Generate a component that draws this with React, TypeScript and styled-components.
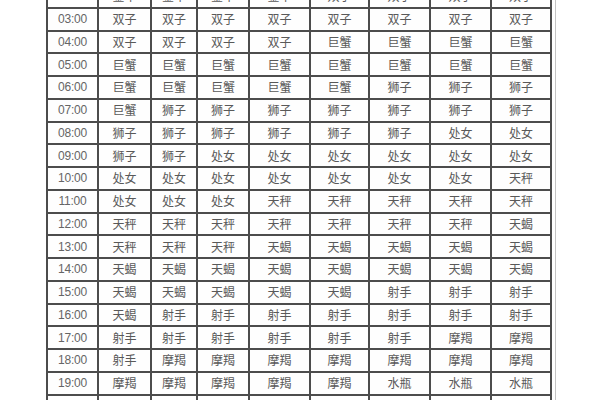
import React from 'react';
import styled, { createGlobalStyle } from 'styled-components';

const GlobalStyle = createGlobalStyle`
	html, body {
		margin: 0;
		padding: 0;
		background: #ffffff;
		overflow: hidden;
	}
`;

const COLUMN_WIDTHS = [51, 53, 46, 52, 61, 59, 61, 61, 60];

const ROWS: [string, string[]][] = [
	['02:00', ['金牛', '金牛', '金牛', '金牛', '双子', '双子', '双子', '双子']],
	['03:00', ['双子', '双子', '双子', '双子', '双子', '双子', '双子', '双子']],
	['04:00', ['双子', '双子', '双子', '双子', '巨蟹', '巨蟹', '巨蟹', '巨蟹']],
	['05:00', ['巨蟹', '巨蟹', '巨蟹', '巨蟹', '巨蟹', '巨蟹', '巨蟹', '巨蟹']],
	['06:00', ['巨蟹', '巨蟹', '巨蟹', '巨蟹', '巨蟹', '狮子', '狮子', '狮子']],
	['07:00', ['巨蟹', '狮子', '狮子', '狮子', '狮子', '狮子', '狮子', '狮子']],
	['08:00', ['狮子', '狮子', '狮子', '狮子', '狮子', '狮子', '处女', '处女']],
	['09:00', ['狮子', '狮子', '处女', '处女', '处女', '处女', '处女', '处女']],
	['10:00', ['处女', '处女', '处女', '处女', '处女', '处女', '处女', '天秤']],
	['11:00', ['处女', '处女', '处女', '天秤', '天秤', '天秤', '天秤', '天秤']],
	['12:00', ['天秤', '天秤', '天秤', '天秤', '天秤', '天秤', '天秤', '天蝎']],
	['13:00', ['天秤', '天秤', '天秤', '天蝎', '天蝎', '天蝎', '天蝎', '天蝎']],
	['14:00', ['天蝎', '天蝎', '天蝎', '天蝎', '天蝎', '天蝎', '天蝎', '天蝎']],
	['15:00', ['天蝎', '天蝎', '天蝎', '天蝎', '天蝎', '射手', '射手', '射手']],
	['16:00', ['天蝎', '射手', '射手', '射手', '射手', '射手', '射手', '射手']],
	['17:00', ['射手', '射手', '射手', '射手', '射手', '射手', '摩羯', '摩羯']],
	['18:00', ['射手', '摩羯', '摩羯', '摩羯', '摩羯', '摩羯', '摩羯', '摩羯']],
	['19:00', ['摩羯', '摩羯', '摩羯', '摩羯', '摩羯', '水瓶', '水瓶', '水瓶']],
	['20:00', ['摩羯', '水瓶', '水瓶', '水瓶', '水瓶', '水瓶', '水瓶', '水瓶']],
];

const Page = styled.div`
	width: 600px;
	height: 400px;
	overflow: hidden;
	padding-left: 46px;
	box-sizing: border-box;
`;

// outer light rule on the right edge of the scanned sheet
const Sheet = styled.div`
	display: inline-block;
	margin-top: -16px;
	padding-right: 3px;
	border-right: 1px solid #c4c4c4;
`;

const Table = styled.table`
	border-collapse: collapse;
	table-layout: fixed;
	width: 506px;
`;

const Row = styled.tr`
	height: 22.75px;
`;

const Cell = styled.td<{ $time?: boolean }>`
	padding: 0;
	border: 2px solid #4c4c4c;
	text-align: center;
	vertical-align: middle;
	color: ${({ $time }) => ($time ? '#656565' : '#595959')};
	font-family: ${({ $time }) =>
		$time ? '"Liberation Sans", Arial, sans-serif' : '"Noto Sans CJK SC", "Noto Sans", sans-serif'};
	font-size: 12px;
	line-height: 14px;
	letter-spacing: ${({ $time }) => ($time ? '-0.2px' : '0')};
	white-space: nowrap;
	background: #fefefe;
`;

const App = () => {
	return (
		<>
			<GlobalStyle />
			<Page>
				<Sheet>
					<Table>
						<colgroup>
							{COLUMN_WIDTHS.map((w, i) => (
								<col key={i} style={{ width: w }} />
							))}
						</colgroup>
						<tbody>
							{ROWS.map(([time, signs]) => (
								<Row key={time}>
									<Cell $time>{time}</Cell>
									{signs.map((sign, i) => (
										<Cell key={i}>{sign}</Cell>
									))}
								</Row>
							))}
						</tbody>
					</Table>
				</Sheet>
			</Page>
		</>
	);
};

export default App;
